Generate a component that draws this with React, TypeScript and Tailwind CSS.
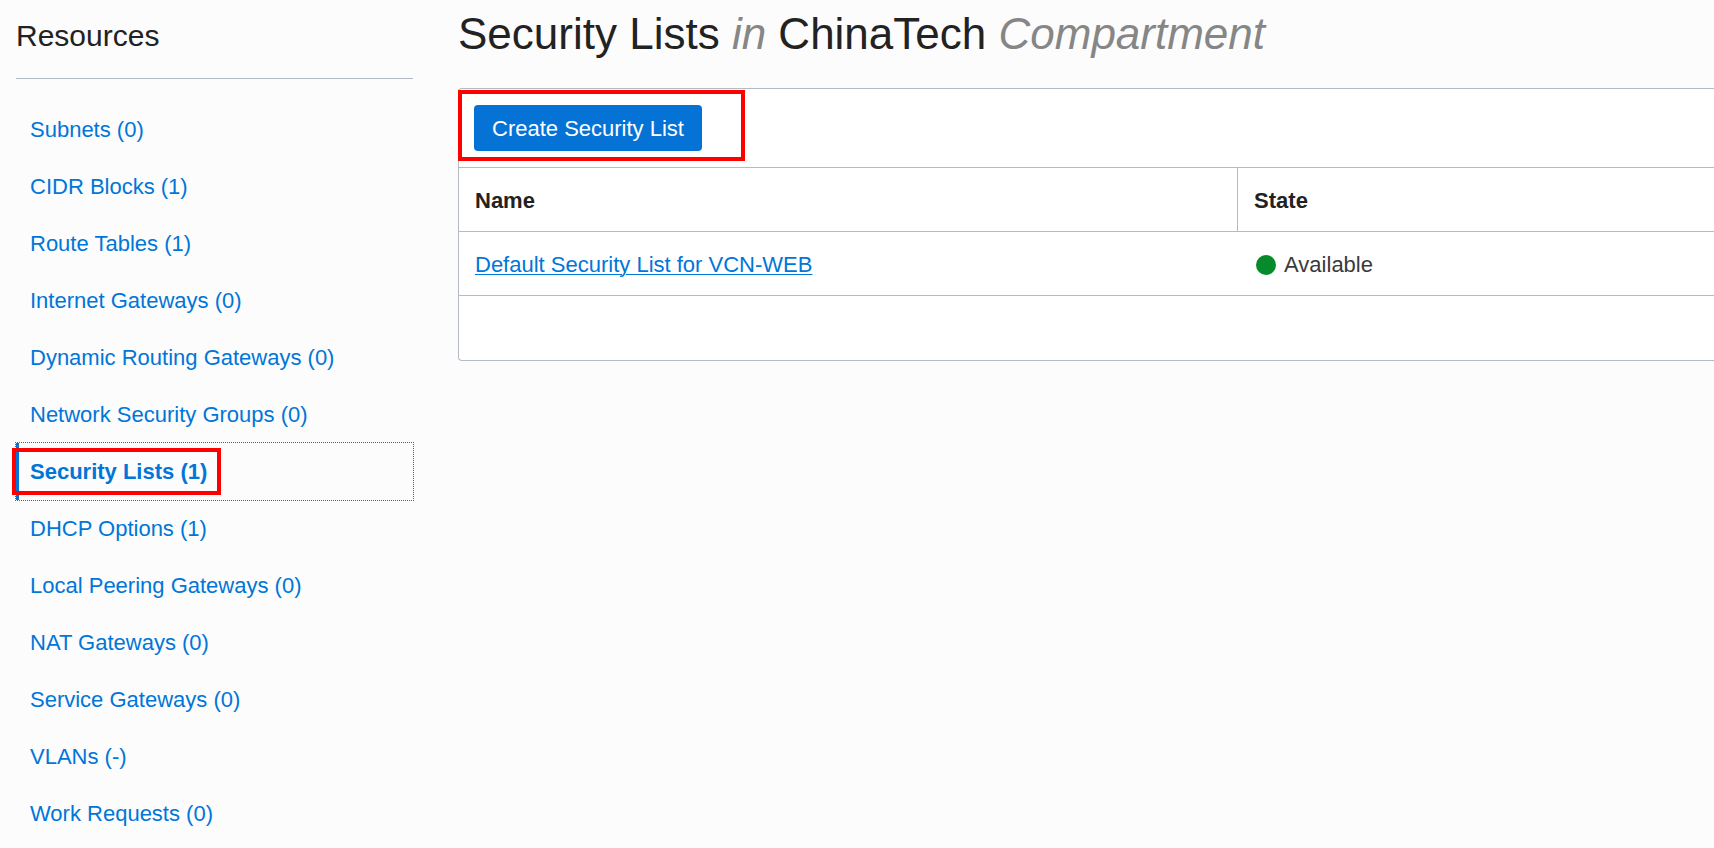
const resources = [
  { label: "Subnets (0)" },
  { label: "CIDR Blocks (1)" },
  { label: "Route Tables (1)" },
  { label: "Internet Gateways (0)" },
  { label: "Dynamic Routing Gateways (0)" },
  { label: "Network Security Groups (0)" },
  { label: "Security Lists (1)", current: true },
  { label: "DHCP Options (1)" },
  { label: "Local Peering Gateways (0)" },
  { label: "NAT Gateways (0)" },
  { label: "Service Gateways (0)" },
  { label: "VLANs (-)" },
  { label: "Work Requests (0)" },
];

function ResourceLink({ label, current }: { label: string; current?: boolean }) {
  if (!current) {
    return (
      <a href="#" className="block h-[57px] pl-3.5 leading-[57px]">
        {label}
      </a>
    );
  }
  return (
    <a
      href="#"
      aria-current="page"
      className="relative block h-[57px] border-l-3 border-[#0572d6] pl-[11px] leading-[57px] font-bold outline outline-dotted outline-[#0572d6]"
    >
      {label}
      <span className="absolute top-[5px] -left-[7px] h-[47px] w-[209px] border-4 border-[#ff0000]" />
    </a>
  );
}

function Sidebar() {
  return (
    <aside className="w-[397px] shrink-0">
      <h2 className="border-b border-[#b4bbc3] pt-[14px] pb-[20px] text-[30px] leading-[44px] font-light">
        Resources
      </h2>
      <nav aria-label="Resources" className="pt-[22px] text-[#0076d8]">
        <ul>
          {resources.map((item) => (
            <li key={item.label}>
              <ResourceLink label={item.label} current={item.current} />
            </li>
          ))}
        </ul>
      </nav>
    </aside>
  );
}

function SecurityListsPanel() {
  return (
    <section className="rounded-l border border-r-0 border-[#b4bbc3] bg-white">
      <div className="relative flex h-[78px] items-center pl-[15px]">
        <button
          type="button"
          className="h-[46px] rounded bg-[#0572d6] px-[18px] pt-0.5 text-white"
        >
          Create Security List
        </button>
        <span className="pointer-events-none absolute top-px -left-px h-[71px] w-[287px] border-4 border-[#ff0000]" />
      </div>
      <table className="w-full table-fixed border-separate border-spacing-0 text-left">
        <thead>
          <tr className="h-[65px]">
            <th className="w-[62%] border-y border-[#b4bbc3] pt-0.5 pl-4 font-bold">Name</th>
            <th className="border-y border-l border-[#b4bbc3] pt-0.5 pl-4 font-bold">State</th>
          </tr>
        </thead>
        <tbody>
          <tr className="h-16">
            <td className="border-b border-[#b4bbc3] pt-0.5 pl-4">
              <a href="#" className="text-[#0076d8] underline decoration-1 underline-offset-2">
                Default Security List for VCN-WEB
              </a>
            </td>
            <td className="border-b border-[#b4bbc3] pt-0.5 pl-[19px] text-[#3a3a3a]">
              <span className="flex items-center gap-2">
                <span className="size-5 rounded-full bg-[#058a2c]" />
                Available
              </span>
            </td>
          </tr>
        </tbody>
      </table>
      <div className="h-16" />
    </section>
  );
}

export default function App() {
  return (
    <div className="flex min-h-screen gap-[45px] bg-[#fcfcfc] pl-4 font-['Liberation_Sans',Arial,sans-serif] text-[22px] leading-7 text-[#222222]">
      <Sidebar />
      <main className="min-w-0 flex-1">
        <h1 className="pt-2 pb-7 text-[44px] leading-[52px]">
          Security Lists <i className="text-[#868686]">in</i> ChinaTech{" "}
          <i className="text-[#868686]">Compartment</i>
        </h1>
        <SecurityListsPanel />
      </main>
    </div>
  );
}
